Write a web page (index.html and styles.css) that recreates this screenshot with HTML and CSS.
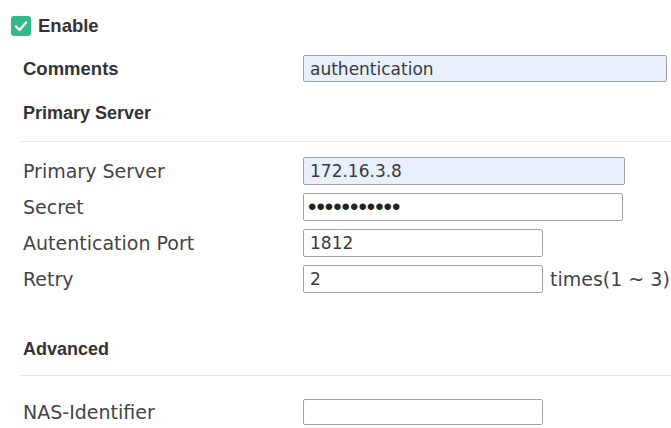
FILE: index.html
```html
<!DOCTYPE html>
<html lang="en">
<head>
  <meta charset="UTF-8">
  <meta name="viewport" content="width=device-width, initial-scale=1.0">
  <title>RADIUS Server</title>
  <link rel="stylesheet" href="styles.css">
</head>
<body>
  <div class="page">
    <label class="enable">
      <span class="check">
        <svg width="20" height="20" viewBox="0 0 20 20">
          <rect x="0" y="0" width="20" height="20" rx="3" fill="#34b98a"/>
          <path d="M5 10.5 L8.5 14 L15 6.5" fill="none" stroke="#fff" stroke-width="2.4" stroke-linecap="round" stroke-linejoin="round"/>
        </svg>
      </span>
      Enable
    </label>

    <div class="row comments">
      <span class="head">Comments</span>
      <input type="text" class="filled wide" value="authentication">
    </div>

    <h3 class="section-title">Primary Server</h3>

    <div class="fields">
      <div class="row">
        <span class="label">Primary Server</span>
        <input type="text" class="filled server" value="172.16.3.8">
      </div>
      <div class="row">
        <span class="label">Secret</span>
        <input type="password" class="server secret" value="radiuskey01">
      </div>
      <div class="row">
        <span class="label">Autentication Port</span>
        <input type="text" class="short" value="1812">
      </div>
      <div class="row">
        <span class="label">Retry</span>
        <div class="inline">
          <input type="text" class="short" value="2">
          <span class="unit">times(1 ~ 3)</span>
        </div>
      </div>
    </div>

    <h3 class="section-title advanced">Advanced</h3>

    <div class="row nas">
      <span class="label">NAS-Identifier</span>
      <input type="text" class="short" value="">
    </div>
  </div>
</body>
</html>
```

FILE: styles.css
```css
body {
  margin: 0;
  background: #fff;
  color: #444;
  font-family: "DejaVu Sans", Verdana, sans-serif;
  overflow: hidden;
}
.page {
  padding-top: 10px;
}
.enable {
  display: flex;
  align-items: center;
  height: 32px;
  padding-left: 11px;
  gap: 7px;
  font-family: "Liberation Sans", Arial, sans-serif;
  font-weight: bold;
  font-size: 18.5px;
  color: #333;
}
.check {
  display: flex;
}
.row {
  display: grid;
  grid-template-columns: 280px 1fr;
  align-items: center;
  padding-left: 23px;
  height: 28px;
}
.comments {
  margin-top: 13px;
  height: 27px;
}
.head {
  font-family: "Liberation Sans", Arial, sans-serif;
  font-weight: bold;
  font-size: 18.5px;
  color: #333;
}
.section-title {
  margin: 18px 0 0 20px;
  padding: 0 0 15px 3px;
  line-height: 26px;
  font-family: "Liberation Sans", Arial, sans-serif;
  font-weight: bold;
  font-size: 18px;
  color: #333;
  border-bottom: 1px solid #e6e6e6;
}
.section-title.advanced {
  margin-top: 43px;
  padding-bottom: 13px;
}
.fields {
  margin-top: 15px;
  display: grid;
  row-gap: 8px;
}
.label {
  font-size: 19px;
  color: #444;
}
input {
  box-sizing: border-box;
  height: 28px;
  padding: 0 6px;
  border: 1px solid #a3a3a3;
  border-radius: 2px;
  background: #fff;
  font-family: "DejaVu Sans", Verdana, sans-serif;
  font-size: 17px;
  color: #3a3a3a;
  outline: none;
}
input.filled {
  background: #e8f0fe;
}
.wide {
  width: 364px;
  height: 27px;
}
.server {
  width: 322px;
}
.secret {
  width: 320px;
  padding-left: 4px;
  font-family: "Liberation Sans", Arial, sans-serif;
  font-size: 24px;
  color: #222;
}
.short {
  width: 240px;
}
.inline {
  display: flex;
  align-items: center;
  gap: 7px;
}
.unit {
  font-size: 19px;
  color: #444;
  white-space: nowrap;
}
.nas {
  margin-top: 23px;
  height: 26px;
}
.nas input {
  height: 26px;
}
```
